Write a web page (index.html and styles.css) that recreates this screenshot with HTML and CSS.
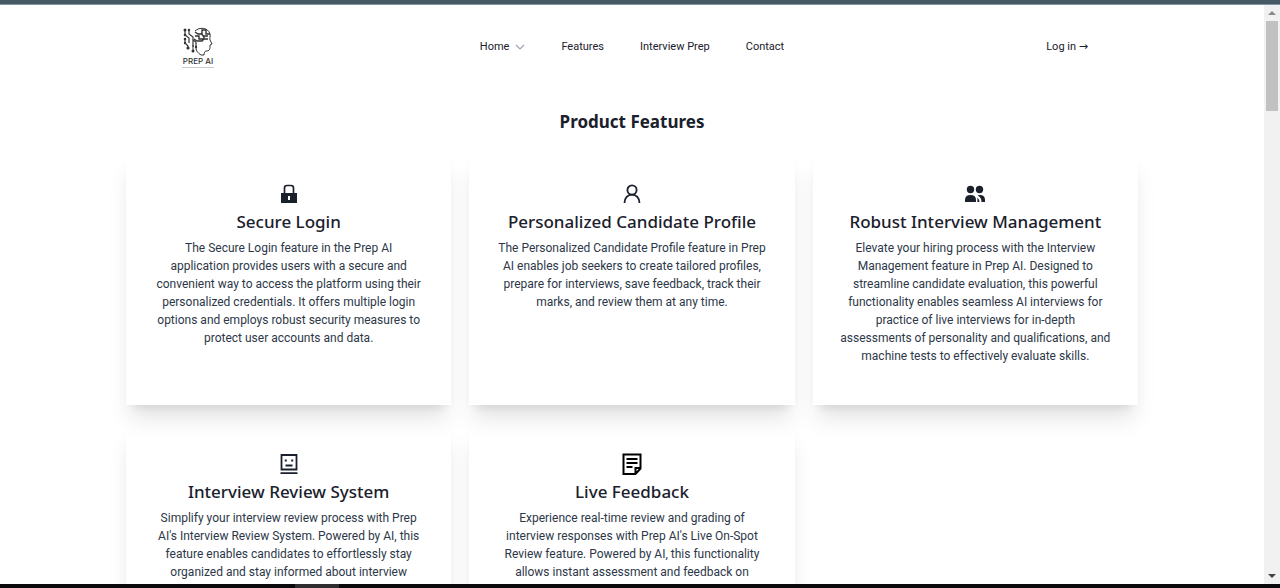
FILE: index.html
```html
<!DOCTYPE html>
<html lang="en">
<head>
<meta charset="utf-8">
<meta name="viewport" content="width=device-width, initial-scale=1">
<title>Prep AI</title>
<link rel="stylesheet" href="styles.css">
</head>
<body>
<div class="window">
  <div class="window-top"></div>
  <div class="viewport">
    <div class="page">
      <header class="header">
        <a class="logo" href="#" aria-label="Prep AI">
          <svg class="logo-mark" viewBox="0 0 32 30" fill="none" stroke="#333" stroke-width="1">
            <path d="M13 4C17 0 26 0 28 7c.6 3-.6 4 0 6l2 4-2 1c0 4 0 6-4 6-1 0-2 2-2 4M14 21c0 3 2 5 5 7h3"/>
            <path d="M13 5l3 2h4V3h4v4h4M13 9h4v3h5V9h4M15 14h5l2-2h4M19 6l3 4M12 12l3 2" stroke-width="1.4"/>
            <path d="M3 3v5l4 3v5M7 3v4l4 3v10M3 12v4l3 3v2M11 13l3 2v5" stroke-width="1.2"/>
            <g fill="#333" stroke="none"><circle cx="3" cy="3" r="1.5"/><circle cx="7" cy="3" r="1.2"/><circle cx="3" cy="8" r="1.3"/><circle cx="3" cy="12" r="1.3"/><circle cx="3" cy="16" r="1.2"/><circle cx="6" cy="21" r="1.6"/><circle cx="11" cy="24" r="1.5"/><circle cx="14" cy="20" r="1.2"/></g>
            <path d="M11 18v6"/>
          </svg>
          <span class="logo-name">PREP AI</span>
          <span class="logo-rule"></span>
        </a>
        <nav class="nav">
          <button class="nav-item nav-button" type="button">Home
            <svg class="chevron" viewBox="0 0 10 10" fill="none" stroke="#9ca3af" stroke-width="1.2"><path d="M1 3l4 4 4-4"/></svg>
          </button>
          <a class="nav-item" href="#">Features</a>
          <a class="nav-item" href="#">Interview Prep</a>
          <a class="nav-item" href="#">Contact</a>
        </nav>
        <a class="nav-item login" href="#">Log in <span class="arrow">→</span></a>
      </header>
      <main class="features">
        <h1 class="title">Product Features</h1>
        <div class="cards">
          <article class="card">
            <svg class="icon" viewBox="0 0 22 22"><path d="M6.500 10V5q0-2.500 2.500-2.500h4q2.500 0 2.500 2.500V10" fill="none" stroke="#1a202c" stroke-width="1.700"/><path d="M3 10h16v10H3zM10 13v4h2v-4z" fill="#1a202c" fill-rule="evenodd"/></svg>
            <h2 class="card-title">Secure Login</h2>
            <p class="card-text">The Secure Login feature in the Prep AI<br>application provides users with a secure and<br>convenient way to access the platform using their<br>personalized credentials. It offers multiple login<br>options and employs robust security measures to<br>protect user accounts and data.</p>
          </article>
          <article class="card">
            <svg class="icon" viewBox="0 0 22 22" fill="none" stroke="#1a202c" stroke-width="1.800"><circle cx="11" cy="7" r="4.600"/><path d="M3.500 20c0-5 3.300-8.400 7.500-8.400s7.500 3.400 7.500 8.400"/></svg>
            <h2 class="card-title">Personalized Candidate Profile</h2>
            <p class="card-text">The Personalized Candidate Profile feature in Prep<br>AI enables job seekers to create tailored profiles,<br>prepare for interviews, save feedback, track their<br>marks, and review them at any time.</p>
          </article>
          <article class="card">
            <svg class="icon" viewBox="0 0 22 22" fill="#1a202c"><circle cx="6.500" cy="6.500" r="3.700"/><circle cx="15.500" cy="6.500" r="3.700"/><path d="M1 19v-2q0-5 5.500-5t5.500 5v2zM13.500 12.300q7.500-1.300 7.500 4.700v2h-3.500q0-4.500-4-6.700zM13.400 14.500q2 2 2 4.500h-2z"/></svg>
            <h2 class="card-title">Robust Interview Management</h2>
            <p class="card-text">Elevate your hiring process with the Interview<br>Management feature in Prep AI. Designed to<br>streamline candidate evaluation, this powerful<br>functionality enables seamless AI interviews for<br>practice of live interviews for in-depth<br>assessments of personality and qualifications, and<br>machine tests to effectively evaluate skills.</p>
          </article>
          <article class="card">
            <svg class="icon" viewBox="0 0 22 22" fill="none" stroke="#1a202c" stroke-width="1.800"><path d="M3.500 2h15v14.500h-15zM2.500 20.200h17M7.500 12.500h7"/><path d="M6.800 7.600h2M13.200 7.600h2" stroke-width="2"/></svg>
            <h2 class="card-title">Interview Review System</h2>
            <p class="card-text">Simplify your interview review process with Prep<br>AI's Interview Review System. Powered by AI, this<br>feature enables candidates to effortlessly stay<br>organized and stay informed about interview</p>
          </article>
          <article class="card">
            <svg class="icon" viewBox="0 0 22 22" fill="none" stroke="#000" stroke-width="2"><path d="M2.500 1.500h17v14l-5 5.500h-12zM19.500 15h-5v6M5.500 6h11M5.500 10h11M5.500 14h6"/></svg>
            <h2 class="card-title">Live Feedback</h2>
            <p class="card-text">Experience real-time review and grading of<br>interview responses with Prep AI's Live On-Spot<br>Review feature. Powered by AI, this functionality<br>allows instant assessment and feedback on</p>
          </article>
        </div>
      </main>
    </div>
    <div class="scrollbar" aria-hidden="true">
      <svg class="scroll-arrow" viewBox="0 0 16 16"><path d="M4 10l4-4 4 4z" fill="#8b8b8b"/></svg>
      <div class="scroll-thumb"></div>
      <svg class="scroll-arrow scroll-down" viewBox="0 0 16 16"><path d="M4 6l4 4 4-4z" fill="#444"/></svg>
    </div>
  </div>
  <div class="window-bottom"><div class="taskbar-item"></div></div>
</div>
</body>
</html>
```
FILE: styles.css
```css
* { box-sizing: border-box; }
body {
  margin: 0;
  font-family: Roboto, "Noto Sans", sans-serif;
  color: #1a202c;
  background: #fff;
}
.window { display: flex; flex-direction: column; height: 100vh; overflow: hidden; }
.window-top { flex: none; height: 5px; background: #455a64; border-bottom: 1px solid #8496a0; }
.viewport { flex: 1; min-height: 0; display: flex; }
.page { flex: 1; min-width: 0; overflow: hidden; }
.window-bottom { flex: none; height: 4px; background: #0b090c; }
.taskbar-item { width: 44px; height: 4px; margin-left: 295px; background: #2f2d30; }

.header {
  display: grid;
  grid-template-columns: 1fr auto 1fr;
  align-items: center;
  max-width: 912px;
  height: 84px;
  margin: 0 auto;
}
.logo { display: flex; flex-direction: column; align-items: center; justify-self: start; width: 44px; color: #333; text-decoration: none; }
.logo-mark { width: 32px; height: 30px; }
.logo-name { font-family: Inter, sans-serif; font-size: 8px; line-height: 9px; font-weight: 500; white-space: nowrap; }
.logo-rule { width: 32px; height: 1px; margin-top: 1px; background: #ccc; }
.nav { display: flex; align-items: center; gap: 36px; }
.nav-item { font-size: 11px; line-height: 18px; font-weight: 400; color: #1a202c; text-decoration: none; white-space: nowrap; }
.nav-button { display: flex; align-items: center; gap: 6px; padding: 0; border: 0; background: none; font-family: inherit; }
.chevron { width: 10px; height: 10px; }
.login { justify-self: end; }
.arrow { font-family: "DejaVu Sans", sans-serif; }

.features { max-width: 1012px; margin: 0 auto; padding-top: 18px; }
.title { margin: 0 0 16px; font-family: "Noto Sans", sans-serif; font-size: 17px; line-height: 30px; font-weight: 700; text-align: center; }
.cards { display: grid; grid-template-columns: repeat(3, 1fr); grid-auto-rows: minmax(252px, auto); gap: 18px; }
.card {
  display: flex;
  flex-direction: column;
  align-items: center;
  padding: 30px 18px;
  text-align: center;
  box-shadow: 0 18px 22px -4px rgba(0, 0, 0, 0.1), 0 8px 10px -6px rgba(0, 0, 0, 0.1);
}
.icon { width: 22px; height: 22px; }
.card-title { margin: 4px 0; font-family: "Noto Sans", sans-serif; font-size: 17px; line-height: 26px; font-weight: 500; white-space: nowrap; }
.card-text { margin: 0; font-size: 12px; line-height: 18px; color: #2d3748; white-space: nowrap; }

.scrollbar { flex: none; display: flex; flex-direction: column; align-items: center; width: 16px; background: #f1f1f1; }
.scroll-arrow { width: 16px; height: 16px; }
.scroll-thumb { width: 12px; height: 90px; background: #c1c1c1; }
.scroll-down { margin-top: auto; }
```
